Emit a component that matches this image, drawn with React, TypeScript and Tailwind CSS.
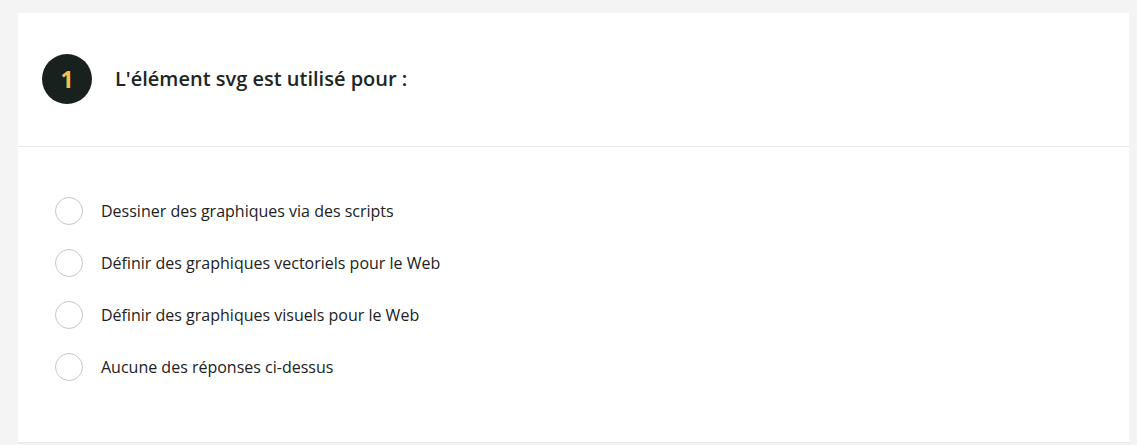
const options = [
  'Dessiner des graphiques via des scripts',
  'Définir des graphiques vectoriels pour le Web',
  'Définir des graphiques visuels pour le Web',
  'Aucune des réponses ci-dessus',
];

export default function App() {
  return (
    <div
      className="min-h-[445px] bg-[#f4f4f4] pt-[13px] px-[18px] pr-[8px]"
      style={{ fontFamily: '"Open Sans", "Noto Sans", sans-serif' }}
    >
      <div className="bg-white">
        <div className="flex h-[134px] items-center gap-[23px] border-b border-[#e6e6e6] pl-[24px] pb-[1px]">
          <div className="flex h-[50px] w-[50px] items-center justify-center rounded-full bg-[#18211e]">
            <span className="text-[23px] font-bold text-[#f2c14e]">1</span>
          </div>
          <h2 className="text-[20px] font-semibold text-[#1e2624]">L'élément svg est utilisé pour :</h2>
        </div>
        <div className="border-b border-[#e6e6e6] pl-[37px] pt-[38px] pb-[49px]">
          {options.map((opt) => (
            <label key={opt} className="flex h-[52px] cursor-pointer items-center gap-[18px]">
              <span className="h-[28px] w-[28px] shrink-0 rounded-full border border-[#c8c8c8] bg-white" />
              <span className="text-[16px] text-[#222]">{opt}</span>
            </label>
          ))}
        </div>
      </div>
    </div>
  );
}
